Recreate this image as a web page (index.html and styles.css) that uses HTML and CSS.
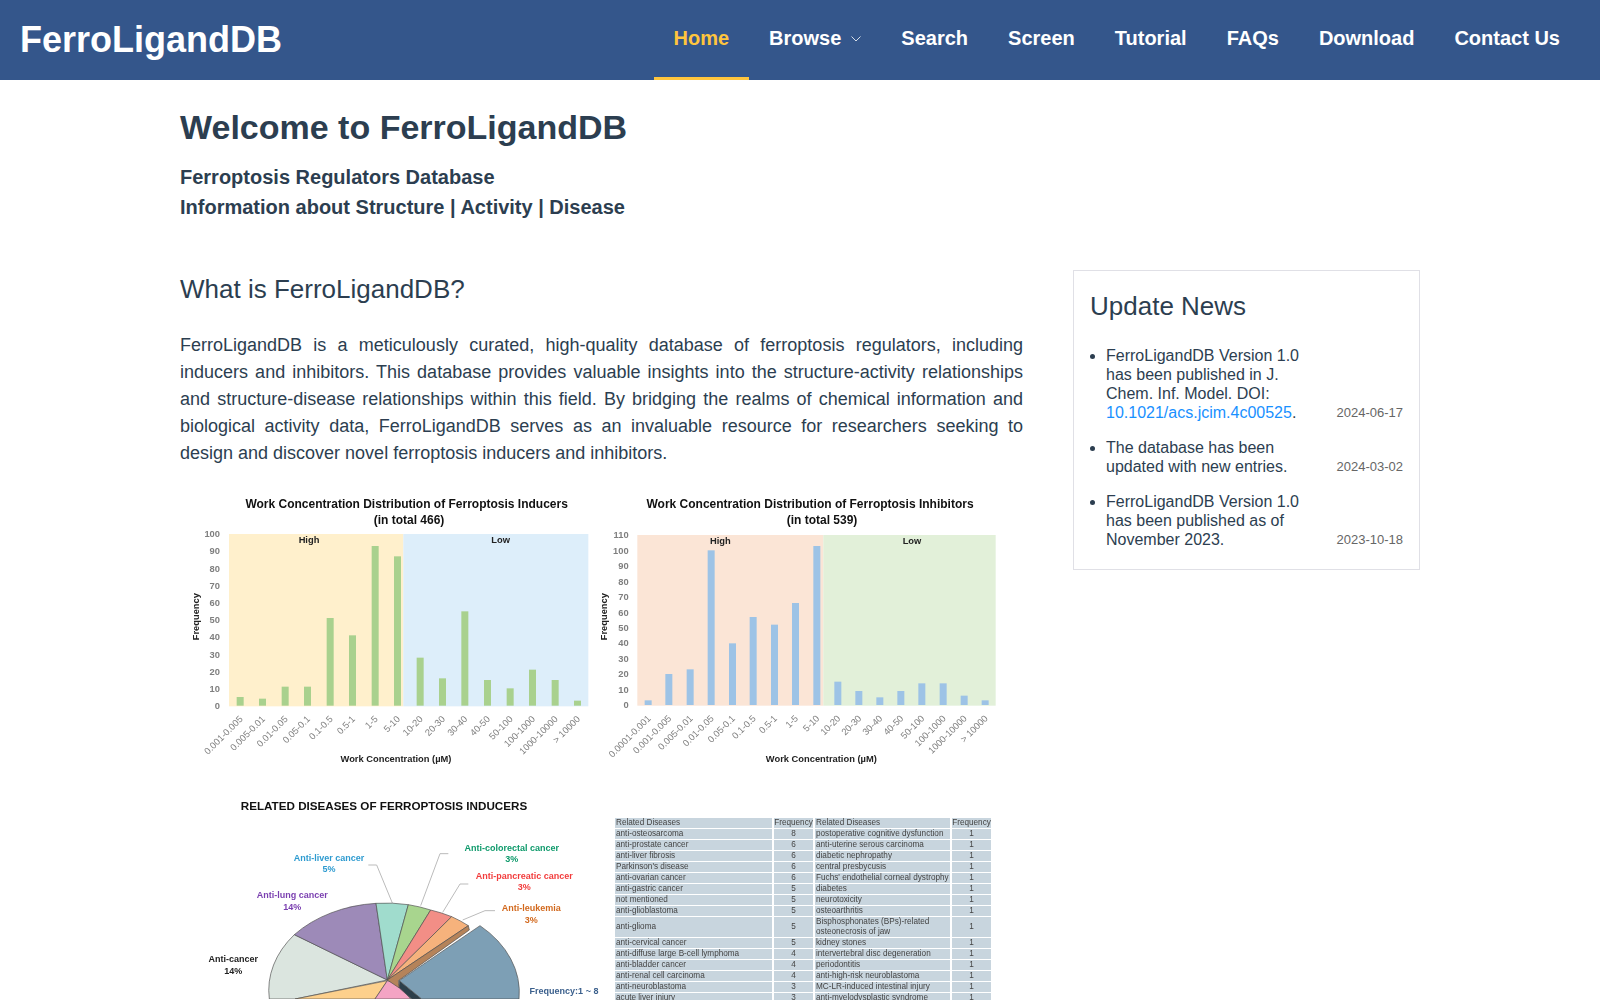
FILE: index.html
```html
<!DOCTYPE html>
<html lang="en">
<head>
  <meta charset="UTF-8">
  <meta name="viewport" content="width=device-width, initial-scale=1.0">
  <title>FerroLigandDB</title>
  <link rel="stylesheet" href="styles.css">
</head>
<body>

  <header class="header">
    <a class="brand" href="#">FerroLigandDB</a>
    <nav class="nav">
      <a class="nav-item active" href="#">Home</a>
      <a class="nav-item" href="#">Browse
        <svg class="caret" width="10" height="6" viewBox="0 0 10 6"><polyline points="0.5,0.5 5,5 9.5,0.5"/></svg>
      </a>
      <a class="nav-item" href="#">Search</a>
      <a class="nav-item" href="#">Screen</a>
      <a class="nav-item" href="#">Tutorial</a>
      <a class="nav-item" href="#">FAQs</a>
      <a class="nav-item" href="#">Download</a>
      <a class="nav-item" href="#">Contact Us</a>
    </nav>
  </header>

  <main class="main">
    <h1>Welcome to FerroLigandDB</h1>
    <p class="subtitle">Ferroptosis Regulators Database</p>
    <p class="subtitle">Information about Structure | Activity | Disease</p>

    <div class="columns">
      <section class="intro">
        <h2>What is FerroLigandDB?</h2>
        <p class="description">FerroLigandDB is a meticulously curated, high-quality database of ferroptosis regulators, including inducers and inhibitors. This database provides valuable insights into the structure-activity relationships and structure-disease relationships within this field. By bridging the realms of chemical information and biological activity data, FerroLigandDB serves as an invaluable resource for researchers seeking to design and discover novel ferroptosis inducers and inhibitors.</p>

        <div class="figure-row">
          <!-- inducers chart -->
          <svg class="figure chart-left" viewBox="0 0 1230 870">
            <text class="chart-title" x="680" y="57">Work Concentration Distribution of Ferroptosis Inducers</text>
            <text class="chart-title" x="687" y="105">(in total 466)</text>
            <rect x="147" y="135" width="523" height="517" fill="#fff0cc"/>
            <rect x="670" y="135" width="555" height="517" fill="#ddeefa"/>
            <text class="chart-zone" x="387" y="162">High</text>
            <text class="chart-zone" x="962" y="162">Low</text>
            <g fill="#a9d18e">
              <rect x="170" y="624" width="21" height="26"/>
              <rect x="237" y="629" width="21" height="21"/>
              <rect x="305" y="593" width="21" height="57"/>
              <rect x="372" y="593" width="21" height="57"/>
              <rect x="440" y="387" width="21" height="263"/>
              <rect x="507" y="439" width="21" height="211"/>
              <rect x="575" y="171" width="21" height="479"/>
              <rect x="642" y="202" width="21" height="448"/>
              <rect x="710" y="506" width="21" height="144"/>
              <rect x="777" y="568" width="21" height="82"/>
              <rect x="844" y="367" width="21" height="283"/>
              <rect x="912" y="573" width="21" height="77"/>
              <rect x="980" y="598" width="21" height="52"/>
              <rect x="1047" y="542" width="21" height="108"/>
              <rect x="1115" y="573" width="21" height="77"/>
              <rect x="1182" y="635" width="21" height="15"/>
            </g>
            <g class="chart-y">
              <text x="120" y="145">100</text>
              <text x="120" y="196">90</text>
              <text x="120" y="248">80</text>
              <text x="120" y="300">70</text>
              <text x="120" y="351">60</text>
              <text x="120" y="403">50</text>
              <text x="120" y="454">40</text>
              <text x="120" y="506">30</text>
              <text x="120" y="557">20</text>
              <text x="120" y="609">10</text>
              <text x="120" y="660">0</text>
            </g>
            <g class="chart-x">
              <text transform="translate(190 692) rotate(-45)">0.001-0.005</text>
              <text transform="translate(257 692) rotate(-45)">0.005-0.01</text>
              <text transform="translate(325 692) rotate(-45)">0.01-0.05</text>
              <text transform="translate(392 692) rotate(-45)">0.05-0.1</text>
              <text transform="translate(460 692) rotate(-45)">0.1-0.5</text>
              <text transform="translate(527 692) rotate(-45)">0.5-1</text>
              <text transform="translate(595 692) rotate(-45)">1-5</text>
              <text transform="translate(662 692) rotate(-45)">5-10</text>
              <text transform="translate(730 692) rotate(-45)">10-20</text>
              <text transform="translate(797 692) rotate(-45)">20-30</text>
              <text transform="translate(864 692) rotate(-45)">30-40</text>
              <text transform="translate(932 692) rotate(-45)">40-50</text>
              <text transform="translate(1000 692) rotate(-45)">50-100</text>
              <text transform="translate(1067 692) rotate(-45)">100-1000</text>
              <text transform="translate(1135 692) rotate(-45)">1000-10000</text>
              <text transform="translate(1202 692) rotate(-45)">&gt; 10000</text>
            </g>
            <text class="chart-zone" transform="translate(57 383) rotate(-90)">Frequency</text>
            <text class="chart-zone" x="648" y="818">Work Concentration (µM)</text>
          </svg>

          <!-- inhibitors chart -->
          <svg class="figure chart-right" viewBox="0 0 1260 870">
            <text class="chart-title" x="660" y="57">Work Concentration Distribution of Ferroptosis Inhibitors</text>
            <text class="chart-title" x="696" y="105">(in total 539)</text>
            <rect x="142" y="138" width="558" height="512" fill="#fbe5d6"/>
            <rect x="700" y="138" width="517" height="512" fill="#e2f0d9"/>
            <text class="chart-zone" x="391" y="166">High</text>
            <text class="chart-zone" x="966" y="166">Low</text>
            <g fill="#9dc3e6">
              <rect x="164" y="634" width="21" height="14"/>
              <rect x="226" y="555" width="21" height="93"/>
              <rect x="290" y="541" width="21" height="107"/>
              <rect x="353" y="184" width="21" height="464"/>
              <rect x="417" y="463" width="21" height="185"/>
              <rect x="479" y="384" width="21" height="264"/>
              <rect x="543" y="407" width="21" height="241"/>
              <rect x="606" y="342" width="21" height="306"/>
              <rect x="670" y="171" width="21" height="477"/>
              <rect x="733" y="578" width="21" height="70"/>
              <rect x="796" y="606" width="21" height="42"/>
              <rect x="859" y="625" width="21" height="23"/>
              <rect x="922" y="606" width="21" height="42"/>
              <rect x="985" y="583" width="21" height="65"/>
              <rect x="1049" y="583" width="21" height="65"/>
              <rect x="1112" y="620" width="21" height="28"/>
              <rect x="1175" y="634" width="21" height="14"/>
            </g>
            <g class="chart-y">
              <text x="116" y="148">110</text>
              <text x="116" y="194">100</text>
              <text x="116" y="241">90</text>
              <text x="116" y="287">80</text>
              <text x="116" y="333">70</text>
              <text x="116" y="380">60</text>
              <text x="116" y="426">50</text>
              <text x="116" y="472">40</text>
              <text x="116" y="519">30</text>
              <text x="116" y="565">20</text>
              <text x="116" y="611">10</text>
              <text x="116" y="657">0</text>
            </g>
            <g class="chart-x">
              <text transform="translate(184 690) rotate(-45)">0.0001-0.001</text>
              <text transform="translate(246 690) rotate(-45)">0.001-0.005</text>
              <text transform="translate(310 690) rotate(-45)">0.005-0.01</text>
              <text transform="translate(373 690) rotate(-45)">0.01-0.05</text>
              <text transform="translate(437 690) rotate(-45)">0.05-0.1</text>
              <text transform="translate(499 690) rotate(-45)">0.1-0.5</text>
              <text transform="translate(563 690) rotate(-45)">0.5-1</text>
              <text transform="translate(626 690) rotate(-45)">1-5</text>
              <text transform="translate(690 690) rotate(-45)">5-10</text>
              <text transform="translate(753 690) rotate(-45)">10-20</text>
              <text transform="translate(816 690) rotate(-45)">20-30</text>
              <text transform="translate(879 690) rotate(-45)">30-40</text>
              <text transform="translate(942 690) rotate(-45)">40-50</text>
              <text transform="translate(1005 690) rotate(-45)">50-100</text>
              <text transform="translate(1069 690) rotate(-45)">100-1000</text>
              <text transform="translate(1132 690) rotate(-45)">1000-10000</text>
              <text transform="translate(1195 690) rotate(-45)">&gt; 10000</text>
            </g>
            <text class="chart-zone" transform="translate(50 383) rotate(-90)">Frequency</text>
            <text class="chart-zone" x="694" y="820">Work Concentration (µM)</text>
          </svg>
        </div>

        <div class="figure-row second">
          <!-- disease pie, the page cuts it off at the bottom -->
          <svg class="figure chart-pie" viewBox="0 0 1275 645">
            <text class="pie-title" x="612" y="78">RELATED DISEASES OF FERROPTOSIS INDUCERS</text>
            <g fill="none" stroke="#bbbbbb" stroke-width="3">
              <polyline points="565,243 590,243 637,357"/>
              <polyline points="805,209 780,209 722,365"/>
              <polyline points="865,300 840,300 788,385"/>
              <polyline points="945,380 915,380 848,408"/>
            </g>
            <g stroke="#4d4d4d" stroke-width="2">
              <path fill="#dbe5df" d="M622 588 L345 645 L268 645 A360 270 0 0 1 343 452 Z"/>
              <path fill="#9d8ab8" d="M622 588 L343 452 A360 270 0 0 1 588 358 Z"/>
              <path fill="#a0dccd" d="M622 588 L588 358 A360 270 0 0 1 685 362 Z"/>
              <path fill="#a8d58e" d="M622 588 L685 362 A360 270 0 0 1 752 378 Z"/>
              <path fill="#f28e86" d="M622 588 L752 378 A360 270 0 0 1 815 398 Z"/>
              <path fill="#f6b27c" d="M622 588 L815 398 A360 270 0 0 1 865 425 Z"/>
              <path fill="#fdd08c" d="M622 590 L345 645 L585 645 Z"/>
              <path fill="#f4a4c4" d="M622 590 L585 645 L692 645 L655 600 Z"/>
              <path fill="#b5835a" d="M622 588 L865 425 L868 438 L655 590 L658 612 Z"/>
              <path fill="#2d3f4a" d="M658 590 L725 645 L695 645 L658 612 Z"/>
              <path fill="#7d9fb5" d="M658 590 L900 425 A360 270 0 0 1 1017 645 L725 645 Z"/>
            </g>
            <text class="pie-label liver" x="447" y="230">Anti-liver cancer</text>
            <text class="pie-label liver" x="447" y="264">5%</text>
            <text class="pie-label colorectal" x="995" y="200">Anti-colorectal cancer</text>
            <text class="pie-label colorectal" x="995" y="235">3%</text>
            <text class="pie-label pancreatic" x="1033" y="284">Anti-pancreatic cancer</text>
            <text class="pie-label pancreatic" x="1033" y="318">3%</text>
            <text class="pie-label leukemia" x="1054" y="381">Anti-leukemia</text>
            <text class="pie-label leukemia" x="1054" y="416">3%</text>
            <text class="pie-label lung" x="337" y="343">Anti-lung cancer</text>
            <text class="pie-label lung" x="337" y="378">14%</text>
            <text class="pie-label" x="160" y="535">Anti-cancer</text>
            <text class="pie-label" x="160" y="570">14%</text>
            <text class="pie-label frequency" x="1152" y="631">Frequency:1 ~ 8</text>
          </svg>

          <table class="figure disease-table">
            <colgroup>
              <col class="col-name"><col class="col-freq"><col class="col-name2"><col class="col-freq">
            </colgroup>
            <tr><td>Related Diseases</td><td class="freq">Frequency</td><td>Related Diseases</td><td class="freq">Frequency</td></tr>
            <tr><td>anti-osteosarcoma</td><td class="freq">8</td><td>postoperative cognitive dysfunction</td><td class="freq">1</td></tr>
            <tr><td>anti-prostate cancer</td><td class="freq">6</td><td>anti-uterine serous carcinoma</td><td class="freq">1</td></tr>
            <tr><td>anti-liver fibrosis</td><td class="freq">6</td><td>diabetic nephropathy</td><td class="freq">1</td></tr>
            <tr><td>Parkinson's disease</td><td class="freq">6</td><td>central presbycusis</td><td class="freq">1</td></tr>
            <tr><td>anti-ovarian cancer</td><td class="freq">6</td><td>Fuchs' endothelial corneal dystrophy</td><td class="freq">1</td></tr>
            <tr><td>anti-gastric cancer</td><td class="freq">5</td><td>diabetes</td><td class="freq">1</td></tr>
            <tr><td>not mentioned</td><td class="freq">5</td><td>neurotoxicity</td><td class="freq">1</td></tr>
            <tr><td>anti-glioblastoma</td><td class="freq">5</td><td>osteoarthritis</td><td class="freq">1</td></tr>
            <tr><td>anti-glioma</td><td class="freq">5</td><td>Bisphosphonates (BPs)-related<br>osteonecrosis of jaw</td><td class="freq">1</td></tr>
            <tr><td>anti-cervical cancer</td><td class="freq">5</td><td>kidney stones</td><td class="freq">1</td></tr>
            <tr><td>anti-diffuse large B-cell lymphoma</td><td class="freq">4</td><td>intervertebral disc degeneration</td><td class="freq">1</td></tr>
            <tr><td>anti-bladder cancer</td><td class="freq">4</td><td>periodontitis</td><td class="freq">1</td></tr>
            <tr><td>anti-renal cell carcinoma</td><td class="freq">4</td><td>anti-high-risk neuroblastoma</td><td class="freq">1</td></tr>
            <tr><td>anti-neuroblastoma</td><td class="freq">3</td><td>MC-LR-induced intestinal injury</td><td class="freq">1</td></tr>
            <tr><td>acute liver injury</td><td class="freq">3</td><td>anti-myelodysplastic syndrome</td><td class="freq">1</td></tr>
          </table>
        </div>
      </section>

      <aside class="news">
        <h3>Update News</h3>
        <ul class="news-list">
          <li>
            <div class="news-row">
              <span class="news-text">FerroLigandDB Version 1.0 has been published in J. Chem. Inf. Model. DOI: <a href="#">10.1021/acs.jcim.4c00525</a>.</span>
              <span class="news-date">2024-06-17</span>
            </div>
          </li>
          <li>
            <div class="news-row">
              <span class="news-text">The database has been updated with new entries.</span>
              <span class="news-date">2024-03-02</span>
            </div>
          </li>
          <li>
            <div class="news-row">
              <span class="news-text">FerroLigandDB Version 1.0 has been published as of November 2023.</span>
              <span class="news-date">2023-10-18</span>
            </div>
          </li>
        </ul>
      </aside>
    </div>
  </main>

</body>
</html>
```

FILE: styles.css
```css
/* Page */
html, body {
  height: 100%;
  overflow: hidden;
}

body {
  margin: 0;
  font-family: "Liberation Sans", Arial, sans-serif;
  color: #2c3e50;
  background-color: #fff;
}

/* Header */
.header {
  display: flex;
  justify-content: space-between;
  align-items: stretch;
  height: 80px;
  padding: 0 20px;
  background-color: #34568b;
}

.brand {
  align-self: center;
  font-size: 36px;
  font-weight: bold;
  color: #fff;
  text-decoration: none;
}

.nav {
  display: flex;
}

.nav-item {
  display: flex;
  align-items: center;
  gap: 10px;
  padding: 0 20px;
  font-size: 20px;
  font-weight: bold;
  color: #fff;
  text-decoration: none;
  border-bottom: 3px solid transparent;
}

.nav-item.active {
  color: #ffc53d;
  border-bottom-color: #ffc53d;
}

.caret {
  fill: none;
  stroke: #fff;
  stroke-width: 1;
  opacity: 0.8;
}

/* Main content */
.main {
  padding: 27px 180px 0;
}

h1 {
  margin: 0 0 15px;
  font-size: 34px;
  line-height: 40px;
}

.subtitle {
  margin: 0;
  font-size: 20px;
  font-weight: bold;
  line-height: 30px;
}

.columns {
  display: flex;
  justify-content: space-between;
  margin-top: 48px;
}

.intro {
  width: 843px;
}

h2 {
  margin: 0 0 24px;
  font-size: 26px;
  font-weight: normal;
  line-height: 38px;
}

.description {
  margin: 0 0 22px;
  font-size: 18px;
  line-height: 27px;
  text-align: justify;
}

/* Figures */
.figure-row {
  display: flex;
  align-items: flex-start;
}

.figure-row.second {
  margin-top: 5px;
}

.figure {
  filter: blur(0.35px);
}

.chart-left {
  width: 410px;
  height: 290px;
}

.chart-right {
  width: 420px;
  height: 290px;
}

.chart-pie {
  width: 425px;
  height: 215px;
}

.chart-title {
  font-size: 36px;
  font-weight: bold;
  fill: #111;
  text-anchor: middle;
}

.chart-zone {
  font-size: 28px;
  font-weight: bold;
  fill: #222;
  text-anchor: middle;
}

.chart-y text {
  font-size: 28px;
  font-weight: bold;
  fill: #7f7f7f;
  text-anchor: end;
}

.chart-x text {
  font-size: 28px;
  fill: #7f7f7f;
  text-anchor: end;
}

.pie-title {
  font-size: 35px;
  font-weight: bold;
  fill: #111;
  text-anchor: middle;
}

.pie-label {
  font-size: 27px;
  font-weight: bold;
  fill: #222;
  text-anchor: middle;
}

.pie-label.liver { fill: #2e9bd0; }
.pie-label.colorectal { fill: #0e9a6b; }
.pie-label.pancreatic { fill: #f23c3c; }
.pie-label.leukemia { fill: #d2691e; }
.pie-label.lung { fill: #7a3fb0; }
.pie-label.frequency { fill: #3a5f8c; }

/* Disease table */
.disease-table {
  table-layout: fixed;
  width: 380px;
  margin: 33px 0 0 8px;
  border-collapse: separate;
  border-spacing: 2px 1px;
  font-size: 8.2px;
  line-height: 10px;
  color: #444;
}

.col-name { width: 157px; }
.col-name2 { width: 135px; }
.col-freq { width: 39px; }

.disease-table td {
  padding: 0 1px;
  height: 10px;
  background-color: #c8d5de;
  white-space: nowrap;
}

.disease-table .freq {
  padding: 0;
  text-align: center;
}

/* Update news */
.news {
  box-sizing: border-box;
  align-self: flex-start;
  width: 347px;
  height: 300px;
  padding: 16px;
  border: 1px solid #e0e0e6;
}

h3 {
  margin: 0 0 21px;
  font-size: 26px;
  font-weight: normal;
  line-height: 38px;
}

.news-list {
  margin: 0;
  padding: 0 0 0 16px;
  font-size: 16px;
  line-height: 19px;
}

.news-list li {
  margin-bottom: 16px;
}

.news-row {
  display: flex;
  justify-content: space-between;
  align-items: flex-end;
}

.news-text {
  width: 205px;
}

.news-text a {
  color: #1890ff;
  text-decoration: none;
}

.news-date {
  font-size: 13px;
  color: #666;
}
```
